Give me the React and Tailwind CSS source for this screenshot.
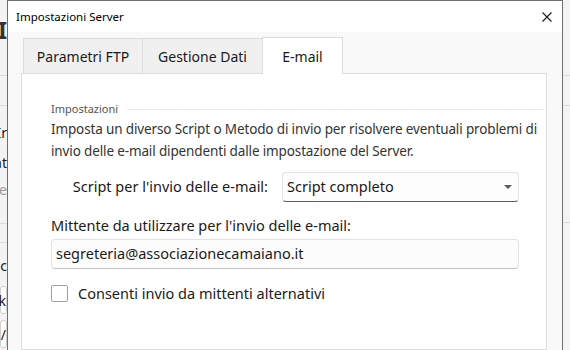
import { useState } from 'react';

const font = { fontFamily: '"Noto Sans", "Open Sans", sans-serif' };

function BackgroundApp() {
  // pezzi della finestra principale che si vedono ai lati del dialogo
  return (
    <div className="flex h-full w-full bg-[#f3f3f3]">
      <div className="flex w-[7px] flex-col overflow-hidden text-[#1a1a1a]">
        <div className="mt-[18px] flex h-[24px] justify-end">
          <span className="whitespace-nowrap text-[24px] font-bold leading-[24px] text-[#333]">HI</span>
        </div>
        <div className="mt-[33px] h-[31px] border-y border-[#dcdcdc]" />
        <div className="mt-[18px] flex justify-end text-[14px] leading-[18px]">
          <span className="whitespace-nowrap">Ir</span>
        </div>
        <div className="mt-[12px] flex justify-end text-[14px] leading-[18px]">
          <span className="whitespace-nowrap">at</span>
        </div>
        <div className="mt-[9px] flex justify-end text-[14px] leading-[18px] text-[#999]">
          <span className="whitespace-nowrap">e</span>
        </div>
        <div className="mt-[24px] h-[20px] border-y border-[#dcdcdc]" />
        <div className="mt-[15px] flex justify-end text-[14px] leading-[16px]">
          <span className="whitespace-nowrap">ic</span>
        </div>
        <div className="mt-[12px] flex h-[28px] items-center justify-end rounded-[3px] border border-[#d0d0d0] bg-white text-[14px]">
          <span className="whitespace-nowrap">k</span>
        </div>
        <div className="mt-[6px] flex h-[28px] items-center justify-end rounded-[3px] border border-[#d0d0d0] bg-white text-[14px]">
          <span className="whitespace-nowrap">/</span>
        </div>
      </div>
      <div className="flex-1" />
      <div className="flex w-[7px] flex-col">
        <div className="mt-[75px] h-[31px] border-y border-[#dcdcdc]" />
        <div className="mt-[116px] border-t border-[#dcdcdc]" />
      </div>
    </div>
  );
}

function Tab({ label, active, w }) {
  if (active) {
    return (
      <div className={`relative z-10 -mb-px flex h-[37px] items-center justify-center border border-b-0 border-[#dcdcdc] bg-white text-[14px] text-[#1a1a1a] ${w}`}>
        {label}
      </div>
    );
  }
  return (
    <div className={`flex h-[35px] items-center justify-center border-l border-t border-[#dcdcdc] bg-[#f0f0f0] text-[14px] text-[#1a1a1a] ${w}`}>
      {label}
    </div>
  );
}

function EmailPanel() {
  const [checked, setChecked] = useState(false);
  return (
    <div className="flex flex-col pl-[29px] pr-[1px] pt-[27px]">
      <div className="flex items-center gap-[9px]">
        <span className="text-[11px] leading-[16px] text-[#555]">Impostazioni</span>
        <div className="h-px flex-1 bg-[#e6e6e6]" />
      </div>
      <p className="mt-[1px] pr-[2px] text-[13.5px] leading-[22px] tracking-[-0.01em] text-[#333]">
        Imposta un diverso Script o Metodo di invio per risolvere eventuali problemi di invio delle e-mail dipendenti dalle impostazione del Server.
      </p>
      <div className="mt-[10px] flex items-center">
        <span className="w-[231px] pr-[14px] text-right text-[14.5px] text-[#1a1a1a]">Script per l'invio delle e-mail:</span>
        <div className="flex h-[30px] w-[237px] items-center justify-between rounded-[4px] border border-[#e3e3e3] border-b-[#2b6f9c] bg-[#fdfdfd] pl-[4px] pr-[6px] text-[14.5px] text-[#1a1a1a]">
          <span>Script completo</span>
          <svg width="8" height="4" viewBox="0 0 8 4"><path d="M0 0h8L4 4z" fill="#5a5a5a" /></svg>
        </div>
      </div>
      <div className="mt-[13px] text-[14.5px] leading-[20px] text-[#1a1a1a]">Mittente da utilizzare per l'invio delle e-mail:</div>
      <div className="mt-[4px] flex h-[30px] w-[468px] items-center rounded-[4px] border border-[#e3e3e3] border-b-[#c4c4c4] bg-[#fcfcfc] pl-[4px] text-[14.5px] text-[#1a1a1a]">
        segreteria@associazionecamaiano.it
      </div>
      <label className="mt-[14px] flex items-center gap-[10px] text-[14.5px] text-[#1a1a1a]">
        <span
          onClick={() => setChecked(!checked)}
          className="h-[17px] w-[17px] rounded-[2px] border border-[#a0a0a0] bg-white"
        />
        Consenti invio da mittenti alternativi
      </label>
    </div>
  );
}

export default function App() {
  return (
    <div className="relative h-[350px] w-[570px] overflow-hidden" style={font}>
      <BackgroundApp />

      {/* dialogo Impostazioni Server */}
      <div className="absolute left-[7px] top-0 flex h-[350px] w-[556px] flex-col border-x border-t border-[#6e6e6e] bg-[#f9f9f9]">
        <div className="flex h-[31px] shrink-0 items-center justify-between bg-white pl-[8px] pr-[10px]">
          <span className="text-[11.5px] text-[#000]">Impostazioni Server</span>
          <svg width="10" height="10" viewBox="0 0 10 10">
            <path d="M0.5 0.5L9.5 9.5M9.5 0.5L0.5 9.5" stroke="#1a1a1a" strokeWidth="1.1" />
          </svg>
        </div>
        <div className="flex flex-1 flex-col pl-[13px] pr-[15px] pt-[5px]">
          <div className="flex items-end pl-[2px]">
            <Tab label="Parametri FTP" w="w-[119px]" />
            <Tab label="Gestione Dati" w="w-[120px]" />
            <Tab label="E-mail" w="w-[81px]" active />
          </div>
          <div className="flex-1 border border-[#dcdcdc] bg-white">
            <EmailPanel />
          </div>
        </div>
      </div>
    </div>
  );
}
